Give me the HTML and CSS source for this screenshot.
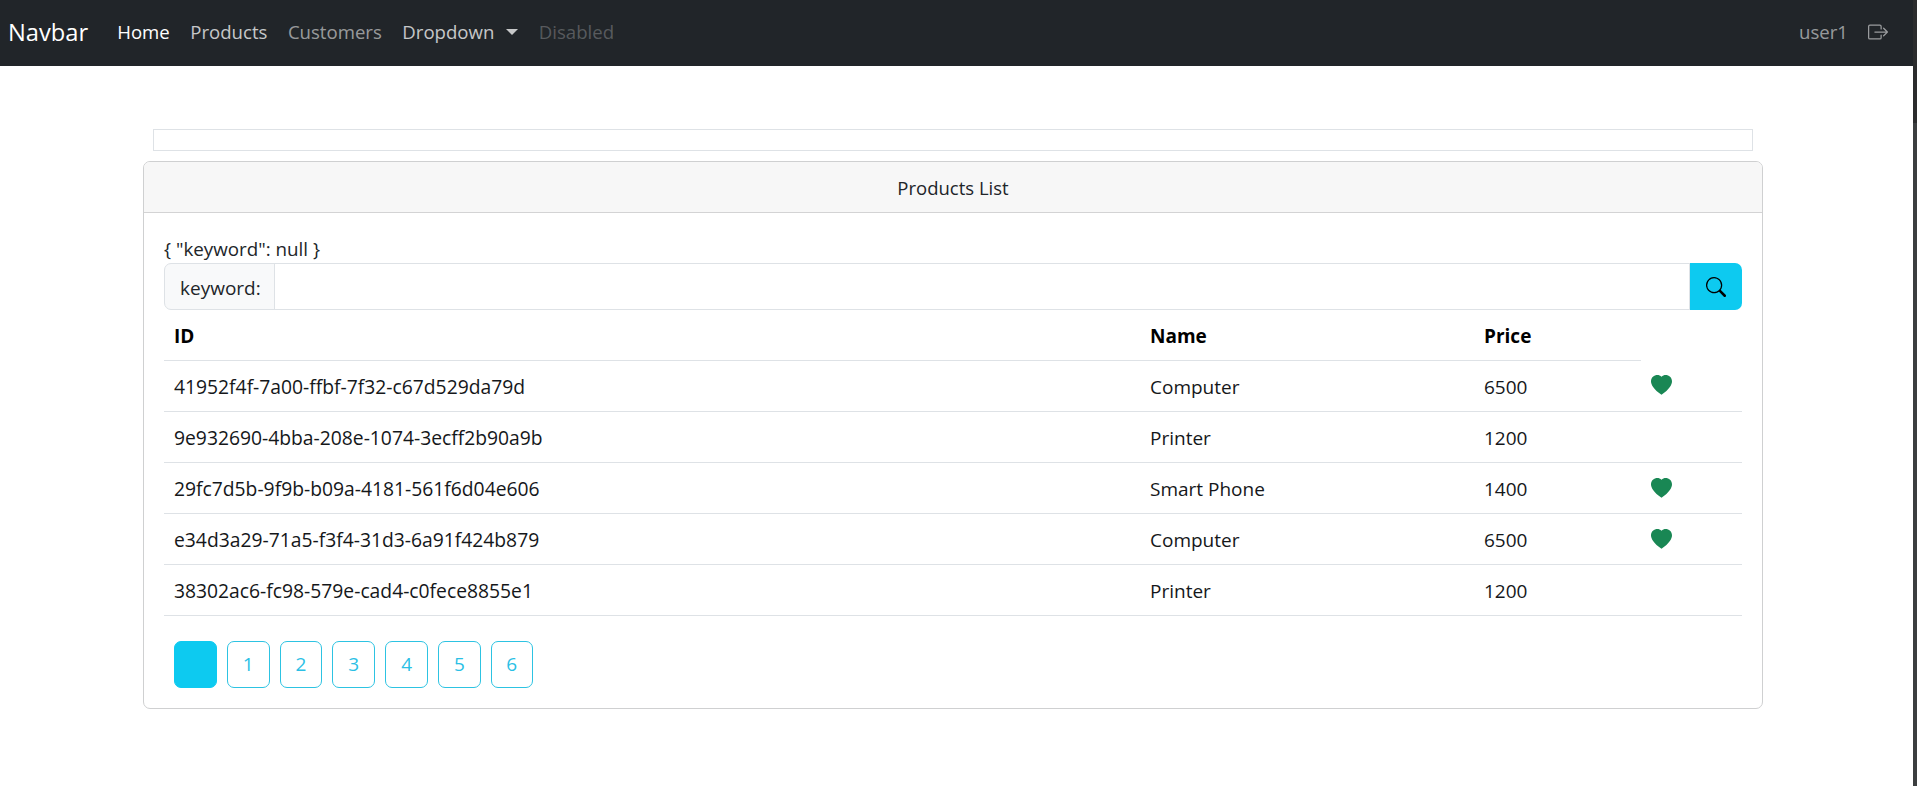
FILE: index.html
```html
<!DOCTYPE html>
<html lang="en">
<head>
    <meta charset="UTF-8">
    <title>Products</title>
    <link rel="stylesheet" href="styles.css">
</head>
<body>
    <div class="page-wrap">
        <nav class="navbar">
            <a class="brand" href="#">Navbar</a>
            <ul class="nav-links">
                <li><a class="active" href="#">Home</a></li>
                <li><a class="light" href="#">Products</a></li>
                <li><a href="#">Customers</a></li>
                <li><a class="light dropdown" href="#">Dropdown</a></li>
                <li><a class="disabled" href="#">Disabled</a></li>
            </ul>
            <div class="nav-user">
                <span>user1</span>
                <svg class="logout" viewBox="0 0 16 16" fill="currentColor">
                    <path fill-rule="evenodd" d="M10 12.5a.5.5 0 0 1-.5.5h-8a.5.5 0 0 1-.5-.5v-9a.5.5 0 0 1 .5-.5h8a.5.5 0 0 1 .5.5v2a.5.5 0 0 0 1 0v-2A1.5 1.5 0 0 0 9.5 2h-8A1.5 1.5 0 0 0 0 3.5v9A1.5 1.5 0 0 0 1.5 14h8a1.5 1.5 0 0 0 1.5-1.5v-2a.5.5 0 0 0-1 0v2z"/>
                    <path fill-rule="evenodd" d="M15.854 8.354a.5.5 0 0 0 0-.708l-3-3a.5.5 0 0 0-.708.708L14.293 7.5H5.5a.5.5 0 0 0 0 1h8.793l-2.147 2.146a.5.5 0 0 0 .708.708l3-3z"/>
                </svg>
            </div>
        </nav>

        <main class="container">
            <div class="empty-bar"></div>
            <section class="card">
                <div class="card-header">Products List</div>
                <div class="card-body">
                    <div class="form-value">{ "keyword": null }</div>
                    <form class="input-group">
                        <span class="input-label">keyword:</span>
                        <input class="input-field" type="text">
                        <button class="search-btn" type="button">
                            <svg viewBox="0 0 16 16" fill="currentColor">
                                <path d="M11.742 10.344a6.5 6.5 0 1 0-1.397 1.398h-.001c.03.04.062.078.098.115l3.85 3.85a1 1 0 0 0 1.415-1.414l-3.85-3.85a1.007 1.007 0 0 0-.115-.1zM12 6.5a5.5 5.5 0 1 1-11 0 5.5 5.5 0 0 1 11 0z"/>
                            </svg>
                        </button>
                    </form>
                    <table class="products">
                        <colgroup>
                            <col class="col-id"><col class="col-name"><col class="col-price"><col>
                        </colgroup>
                        <thead>
                            <tr><th>ID</th><th>Name</th><th>Price</th></tr>
                        </thead>
                        <tbody>
                            <tr>
                                <td class="uuid">41952f4f-7a00-ffbf-7f32-c67d529da79d</td><td>Computer</td><td>6500</td>
                                <td><svg class="heart" viewBox="0 0 16 16" fill="currentColor"><path fill-rule="evenodd" d="M8 1.314C12.438-3.248 23.534 4.735 8 15-7.534 4.736 3.562-3.248 8 1.314z"/></svg></td>
                            </tr>
                            <tr>
                                <td class="uuid">9e932690-4bba-208e-1074-3ecff2b90a9b</td><td>Printer</td><td>1200</td><td></td>
                            </tr>
                            <tr>
                                <td class="uuid">29fc7d5b-9f9b-b09a-4181-561f6d04e606</td><td>Smart Phone</td><td>1400</td>
                                <td><svg class="heart" viewBox="0 0 16 16" fill="currentColor"><path fill-rule="evenodd" d="M8 1.314C12.438-3.248 23.534 4.735 8 15-7.534 4.736 3.562-3.248 8 1.314z"/></svg></td>
                            </tr>
                            <tr>
                                <td class="uuid">e34d3a29-71a5-f3f4-31d3-6a91f424b879</td><td>Computer</td><td>6500</td>
                                <td><svg class="heart" viewBox="0 0 16 16" fill="currentColor"><path fill-rule="evenodd" d="M8 1.314C12.438-3.248 23.534 4.735 8 15-7.534 4.736 3.562-3.248 8 1.314z"/></svg></td>
                            </tr>
                            <tr>
                                <td class="uuid">38302ac6-fc98-579e-cad4-c0fece8855e1</td><td>Printer</td><td>1200</td><td></td>
                            </tr>
                        </tbody>
                    </table>
                    <ul class="pagination">
                        <li><a class="page page-current" href="#"></a></li>
                        <li><a class="page" href="#">1</a></li>
                        <li><a class="page" href="#">2</a></li>
                        <li><a class="page" href="#">3</a></li>
                        <li><a class="page" href="#">4</a></li>
                        <li><a class="page" href="#">5</a></li>
                        <li><a class="page" href="#">6</a></li>
                    </ul>
                </div>
            </section>
        </main>
    </div>
    <div class="scroll-track"><div class="scroll-thumb"></div></div>
</body>
</html>
```

FILE: styles.css
```css
body {
    display: flex;
    height: 100vh;
    overflow: hidden;
    font-family: "Open Sans", "Noto Sans", sans-serif;
    font-size: 19px;
    line-height: 30px;
    margin: 0;
    color: #212529;
    background: #fff;
}
a {
    text-decoration: none;
}
ul {
    list-style: none;
    margin: 0;
    padding: 0;
}
.page-wrap {
    flex: 1;
    min-width: 0;
}
.scroll-track {
    width: 4px;
    background: #3c3e40;
}
.scroll-thumb {
    height: 123px;
    background: #2b2c2d;
}
.navbar {
    display: flex;
    align-items: center;
    box-sizing: border-box;
    height: 66px;
    padding: 0 25px 2px 8px;
    font-size: 18.6px;
    background: #212529;
}
.brand {
    font-size: 23.7px;
    color: #fff;
    margin-right: 29px;
}
.nav-links {
    display: flex;
    gap: 20.5px;
}
.nav-links a {
    color: rgba(255, 255, 255, 0.55);
}
.nav-links a.active {
    color: #fff;
}
.nav-links a.light {
    color: rgba(255, 255, 255, 0.75);
}
.nav-links a.disabled {
    color: rgba(255, 255, 255, 0.25);
}
.dropdown::after {
    content: "";
    display: inline-block;
    margin-left: 12px;
    vertical-align: 4px;
    border-top: 6px solid;
    border-left: 6px solid transparent;
    border-right: 6px solid transparent;
}
.nav-user {
    display: flex;
    align-items: center;
    gap: 20px;
    margin-left: auto;
    color: rgba(255, 255, 255, 0.55);
}
.logout {
    width: 20px;
    height: 20px;
}
.container {
    width: 1620px;
    margin: 63px 0 0 143px;
}
.empty-bar {
    height: 20px;
    margin: 0 10px 10px;
    border: 1px solid #dee2e6;
}
.card {
    border: 1px solid #cfd0d1;
    border-radius: 7px;
}
.card-header {
    height: 50px;
    line-height: 52px;
    font-size: 18.5px;
    text-align: center;
    background: #f7f7f7;
    border-bottom: 1px solid #d3d3d4;
    border-radius: 6px 6px 0 0;
}
.card-body {
    padding: 20px;
}
.form-value {
    height: 29px;
    padding-top: 1px;
    font-size: 18.8px;
}
.input-group {
    display: flex;
    height: 47px;
    margin: 0;
}
.input-label {
    display: flex;
    align-items: center;
    padding: 2px 13px 0 15px;
    background: #f8f9fa;
    border: 1px solid #dee2e6;
    border-radius: 7px 0 0 7px;
}
.input-field {
    flex: 1;
    min-width: 0;
    margin-left: -1px;
    border: 1px solid #dee2e6;
    background: #fff;
    outline: none;
}
.search-btn {
    display: flex;
    align-items: center;
    justify-content: center;
    width: 52px;
    padding: 0;
    color: #000;
    background: #0dcaf0;
    border: none;
    border-radius: 0 7px 7px 0;
}
.search-btn svg {
    width: 20px;
    height: 20px;
}
.products {
    width: 100%;
    table-layout: fixed;
    border-collapse: collapse;
}
.products th {
    box-sizing: border-box;
    height: 50px;
    padding: 2px 10px 0;
    text-align: left;
    font-weight: 700;
    color: #000;
    border-bottom: 1px solid #dee2e6;
}
.products td {
    box-sizing: border-box;
    height: 51px;
    padding: 2px 10px 0;
    color: #15171a;
    border-bottom: 1px solid #dee2e6;
}
.products td.uuid {
    font-size: 19.3px;
}
.col-id {
    width: 976px;
}
.col-name {
    width: 334px;
}
.col-price {
    width: 167px;
}
.heart {
    display: block;
    width: 21px;
    height: 21px;
    margin-top: -1px;
    color: #198754;
}
.pagination {
    display: flex;
    gap: 10px;
    margin: 25px 0 0 10px;
}
.page {
    display: flex;
    align-items: center;
    justify-content: center;
    box-sizing: border-box;
    width: 42.8px;
    height: 47px;
    color: #2bbfe5;
    border: 1px solid #2dc3e2;
    border-radius: 7px;
}
.pagination li:last-child .page {
    width: 42px;
}
.page-current {
    background: #0dcaf0;
    border-color: #0dcaf0;
}
```
